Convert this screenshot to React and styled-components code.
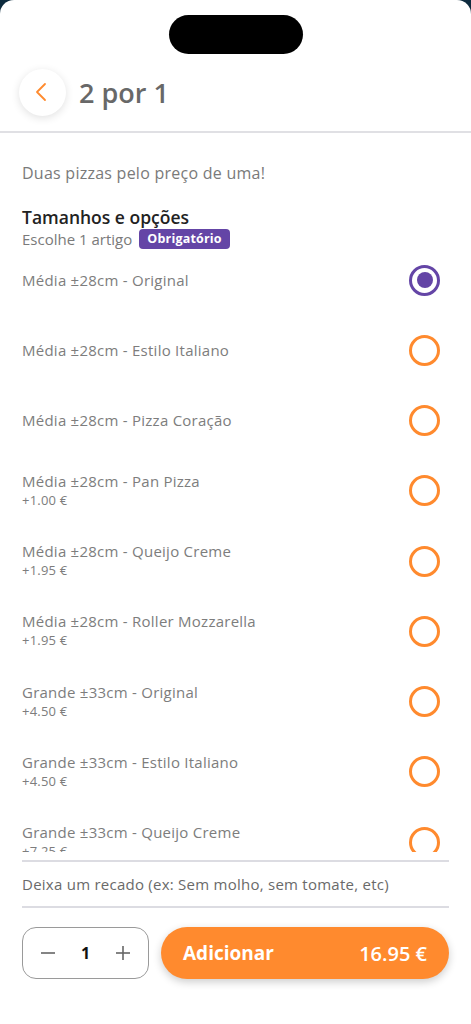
import React from 'react';
import styled, { createGlobalStyle } from 'styled-components';

const options = [
  { id: 1, name: 'Média ±28cm - Original' },
  { id: 2, name: 'Média ±28cm - Estilo Italiano' },
  { id: 3, name: 'Média ±28cm - Pizza Coração' },
  { id: 4, name: 'Média ±28cm - Pan Pizza', price: '+1.00 €' },
  { id: 5, name: 'Média ±28cm - Queijo Creme', price: '+1.95 €' },
  { id: 6, name: 'Média ±28cm - Roller Mozzarella', price: '+1.95 €' },
  { id: 7, name: 'Grande ±33cm - Original', price: '+4.50 €' },
  { id: 8, name: 'Grande ±33cm - Estilo Italiano', price: '+4.50 €' },
  { id: 9, name: 'Grande ±33cm - Queijo Creme', price: '+7.25 €' },
  { id: 10, name: 'Grande ±33cm - Roller Mozzarella', price: '+7.25 €' },
];

const GlobalStyle = createGlobalStyle`
  html, body {
    margin: 0;
    background: #0d2b3e;
  }
  * {
    box-sizing: border-box;
  }
`;

const App = () => {
  const selected = 1;
  return (
    <>
      <GlobalStyle />
      <Screen>
        <Notch>
          <Island />
        </Notch>
        <Header>
          <BackButton>
            <svg width='12' height='20' viewBox='0 0 12 20'>
              <polyline
                points='10,2 2,10 10,18'
                fill='none'
                stroke='#ff8a2e'
                strokeWidth='1.8'
                strokeLinecap='round'
                strokeLinejoin='round'
              />
            </svg>
          </BackButton>
          <Title>2 por 1</Title>
        </Header>
        <Content>
          <Description>Duas pizzas pelo preço de uma!</Description>
          <SectionTitle>Tamanhos e opções</SectionTitle>
          <SubRow>
            Escolhe 1 artigo
            <Badge>Obrigatório</Badge>
          </SubRow>
          <OptionList>
            <OptionScroll>
              {options.map((o) => (
                <OptionRow key={o.id}>
                  <div>
                    <OptionName>{o.name}</OptionName>
                    {o.price && <OptionPrice>{o.price}</OptionPrice>}
                  </div>
                  <Radio checked={o.id === selected} />
                </OptionRow>
              ))}
            </OptionScroll>
          </OptionList>
          <Note>Deixa um recado (ex: Sem molho, sem tomate, etc)</Note>
        </Content>
        <Footer>
          <Stepper>
            <StepButton>
              <svg width='16' height='16' viewBox='0 0 16 16'>
                <line x1='1' y1='8' x2='15' y2='8' stroke='#666' strokeWidth='1.6' />
              </svg>
            </StepButton>
            <Qty>1</Qty>
            <StepButton>
              <svg width='16' height='16' viewBox='0 0 16 16'>
                <line x1='1' y1='8' x2='15' y2='8' stroke='#666' strokeWidth='1.6' />
                <line x1='8' y1='1' x2='8' y2='15' stroke='#666' strokeWidth='1.6' />
              </svg>
            </StepButton>
          </Stepper>
          <AddButton>
            <span>Adicionar</span>
            <Total>16.95 €</Total>
          </AddButton>
        </Footer>
      </Screen>
    </>
  );
};

const Screen = styled.div`
  height: 1024px;
  background: white;
  border-radius: 14px 14px 0 0;
  display: flex;
  flex-direction: column;
  font-family: 'Open Sans', 'Liberation Sans', sans-serif;
  overflow: hidden;
`;

const Notch = styled.div`
  height: 66px;
  display: flex;
  justify-content: center;
  padding-top: 15px;
`;

const Island = styled.div`
  width: 134px;
  height: 39px;
  border-radius: 20px;
  background: #000;
`;

const Header = styled.header`
  height: 67px;
  display: flex;
  align-items: center;
  gap: 13px;
  padding: 0 18px 13px 19px;
  border-bottom: 2px solid #e0e0e4;
`;

const BackButton = styled.button`
  width: 47px;
  height: 47px;
  border-radius: 50%;
  border: none;
  background: white;
  box-shadow: 0 2px 8px rgba(0, 0, 0, 0.12);
  display: flex;
  align-items: center;
  justify-content: center;
  padding: 0 3px 0 0;
`;

const Title = styled.h1`
  margin: 0;
  font-size: 27px;
  font-weight: 600;
  color: #686868;
`;

const Content = styled.main`
  padding: 29px 22px 0;
  display: flex;
  flex-direction: column;
`;

const Description = styled.p`
  margin: 0;
  font-size: 16px;
  line-height: 22px;
  letter-spacing: 0.25px;
  color: #7a7a7a;
`;

const SectionTitle = styled.h2`
  margin: 22px 0 0;
  font-size: 17.5px;
  line-height: 22px;
  font-weight: 600;
  color: #222;
`;

const SubRow = styled.div`
  display: flex;
  align-items: center;
  gap: 7px;
  height: 22px;
  font-size: 15px;
  color: #7a7a7a;
`;

const Badge = styled.span`
  background: #6445a6;
  color: white;
  font-size: 12.5px;
  font-weight: 700;
  letter-spacing: 0.2px;
  border-radius: 4px;
  height: 20px;
  line-height: 20px;
  padding: 0 8px;
`;

const OptionList = styled.div`
  margin-top: -5px;
  padding-bottom: 8px;
  border-bottom: 2px solid #dcdce2;
`;

const OptionScroll = styled.div`
  height: 607px;
  overflow: hidden;
`;

const OptionRow = styled.label`
  height: 70.25px;
  display: flex;
  align-items: center;
  justify-content: space-between;
`;

const OptionName = styled.div`
  font-size: 15px;
  line-height: 19px;
  letter-spacing: 0.25px;
  color: #7d7d7d;
`;

const OptionPrice = styled.div`
  font-size: 13px;
  line-height: 19px;
  letter-spacing: 0.2px;
  color: #7d7d7d;
`;

const Radio = styled.span`
  width: 31px;
  height: 31px;
  margin-right: 9px;
  border-radius: 50%;
  border: 3.5px solid ${(p) => (p.checked ? '#6445a6' : '#ff8a2e')};
  display: flex;
  align-items: center;
  justify-content: center;
  flex-shrink: 0;

  &::after {
    content: '';
    width: 16px;
    height: 16px;
    border-radius: 50%;
    background: #6445a6;
    display: ${(p) => (p.checked ? 'block' : 'none')};
  }
`;

const Note = styled.div`
  height: 46px;
  display: flex;
  align-items: center;
  font-size: 15px;
  letter-spacing: 0.25px;
  color: #6a6a6a;
  border-bottom: 2px solid #dcdce2;
`;

const Footer = styled.footer`
  display: flex;
  gap: 12px;
  padding: 19px 22px 0;
`;

const Stepper = styled.div`
  width: 127px;
  height: 52px;
  border: 1px solid #9a9a9a;
  border-radius: 14px;
  display: flex;
  align-items: center;
  justify-content: space-between;
  padding: 0 17px;
`;

const StepButton = styled.span`
  display: flex;
  align-items: center;
`;

const Qty = styled.span`
  font-size: 16px;
  font-weight: 700;
  color: #111;
`;

const AddButton = styled.button`
  flex: 1;
  height: 52px;
  border: none;
  border-radius: 26px;
  background: #ff8a2e;
  box-shadow: 0 3px 8px rgba(0, 0, 0, 0.2);
  color: white;
  font-family: inherit;
  font-size: 19px;
  font-weight: 700;
  display: flex;
  align-items: center;
  justify-content: space-between;
  padding: 0 22px;
`;

const Total = styled.span`
  font-size: 20px;
  font-weight: 600;
`;

export default App;
